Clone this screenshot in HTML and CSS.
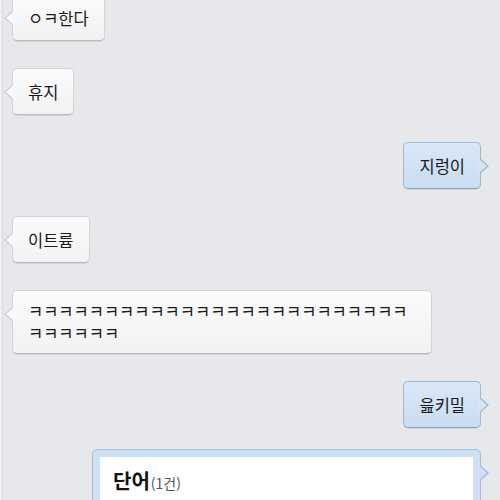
FILE: index.html
```html
<!DOCTYPE html>
<html lang="ko">
<head>
  <meta charset="UTF-8">
  <title>채팅</title>
  <link rel="stylesheet" href="styles.css">
</head>
<body>
  <div class="chat">
    <div class="row left"><div class="bubble">ㅇㅋ한다</div></div>
    <div class="row left"><div class="bubble">휴지</div></div>
    <div class="row right"><div class="bubble mine">지렁이</div></div>
    <div class="row left"><div class="bubble">이트륨</div></div>
    <div class="row left"><div class="bubble long">ㅋㅋㅋㅋㅋㅋㅋㅋㅋㅋㅋㅋㅋㅋㅋㅋㅋㅋㅋㅋㅋㅋㅋㅋㅋㅋㅋㅋㅋㅋㅋ</div></div>
    <div class="row right"><div class="bubble mine">읊키밀</div></div>
    <div class="row right card-row">
      <div class="card">
        <div class="card-body">
          <span class="card-title">단어</span><span class="card-count">(1건)</span>
        </div>
      </div>
    </div>
  </div>
</body>
</html>
```

FILE: styles.css
```css
html, body {
  margin: 0;
  height: 100%;
}
body {
  background-color: #e6e8ec;
  font-family: "Noto Sans CJK KR", "Noto Sans", sans-serif;
  overflow: hidden;
  border-left: 2px solid #eef0f3;
  box-sizing: border-box;
  position: relative;
}
body::before {
  content: "";
  position: absolute;
  top: 0;
  bottom: 0;
  left: 0;
  width: 1px;
  background: #d9dbe0;
}
.chat {
  display: flex;
  flex-direction: column;
  gap: 27px;
  padding: 0 19px 0 10px;
  margin-top: -6px;
}
.row {
  display: flex;
}
.row.left {
  justify-content: flex-start;
}
.row.right {
  justify-content: flex-end;
}
.card-row {
  margin-top: -6px;
}
.bubble {
  position: relative;
  box-sizing: border-box;
  min-height: 47px;
  max-width: 420px;
  padding: 11px 15px 10px;
  font-size: 16.5px;
  line-height: 22px;
  color: #1a1a1a;
  background: linear-gradient(#fbfbfb, #f2f2f2);
  border: 1px solid #d3d4d7;
  border-bottom-color: #b9babd;
  border-radius: 5px;
  box-shadow: 0 1px 0 rgba(0, 0, 0, 0.08);
  display: flex;
  align-items: center;
}
.bubble.long {
  padding: 9px 15px;
  word-break: break-all;
}
.bubble::before,
.bubble::after {
  content: "";
  position: absolute;
  top: 15px;
  border: 8px solid transparent;
}
.row.left .bubble::before {
  left: -17px;
  border-right: 9px solid #cfd0d3;
}
.row.left .bubble::after {
  left: -15px;
  border-right: 9px solid #f9f9f9;
}
.bubble.mine {
  background: linear-gradient(#d9e8f8, #c9dcf1);
  border-color: #a3b8cf;
  border-bottom-color: #8ea4bd;
}
.row.right .bubble::before {
  right: -17px;
  border-left: 9px solid #a3b8cf;
}
.row.right .bubble::after {
  right: -15px;
  border-left: 9px solid #d5e5f6;
}
.card {
  position: relative;
  width: 389px;
  box-sizing: border-box;
  padding: 7px;
  background: #cfe1f4;
  border: 1px solid #a9bed6;
  border-radius: 5px;
}
.card::before,
.card::after {
  content: "";
  position: absolute;
  top: 15px;
  border: 8px solid transparent;
}
.card::before {
  right: -17px;
  border-left: 9px solid #a9bed6;
}
.card::after {
  right: -15px;
  border-left: 9px solid #cfe1f4;
}
.card-body {
  background: #fff;
  height: 60px;
  padding: 10px 13px;
  line-height: 28px;
}
.card-title {
  font-size: 20px;
  font-weight: bold;
  color: #111;
}
.card-count {
  font-size: 14px;
  color: #555;
  margin-left: 1px;
}
```
